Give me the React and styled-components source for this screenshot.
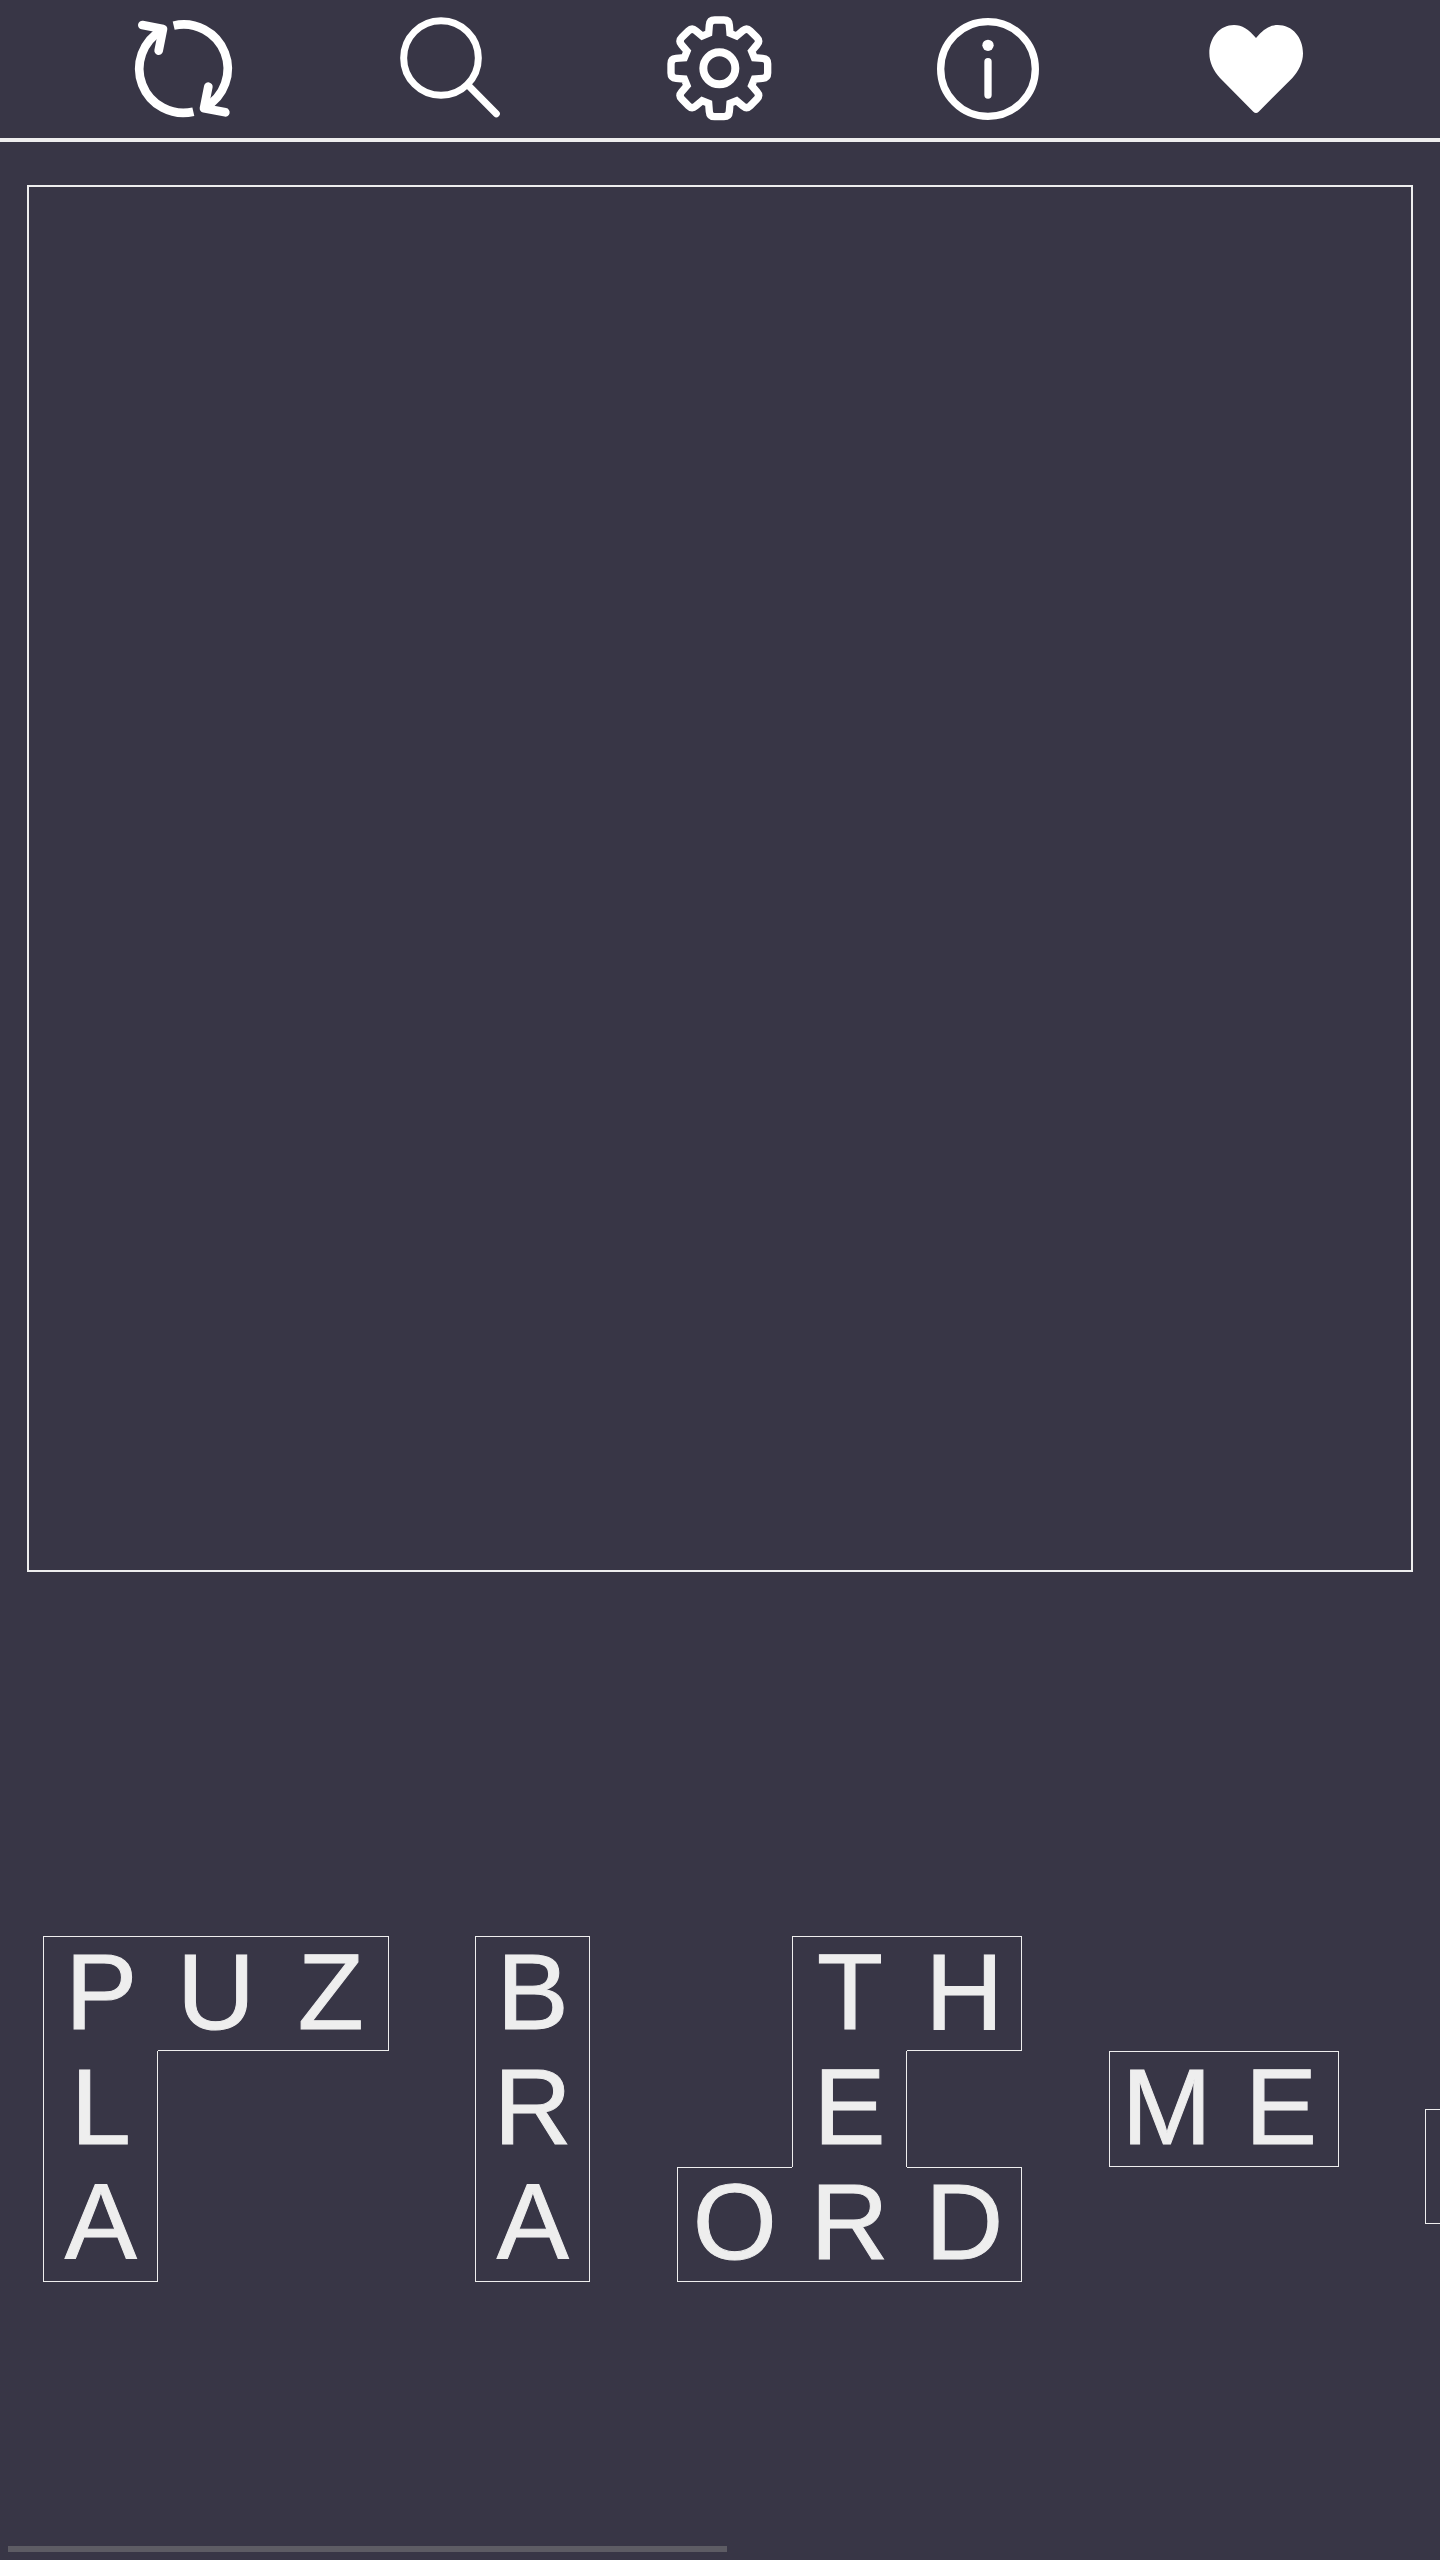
import React from "react";
import styled, { createGlobalStyle } from "styled-components";

const INK = "#eeeeee";
const BACKGROUND = "#383646";

const GlobalStyle = createGlobalStyle`
  *, *::before, *::after {
    box-sizing: border-box;
  }
  body {
    margin: 0;
    background: ${BACKGROUND};
    color: ${INK};
    font-family: "Liberation Sans", Helvetica, Arial, sans-serif;
  }
`;

const Page = styled.div`
  display: flex;
  flex-direction: column;
  min-height: 100vh;
  overflow: hidden;
`;

const Toolbar = styled.header`
  display: flex;
  padding: 0 50px;
  border-bottom: 4px solid ${INK};
`;

const ToolButton = styled.button`
  flex: 1;
  display: flex;
  align-items: center;
  justify-content: center;
  height: 138px;
  padding: 0;
  border: 0;
  background: none;
  color: #ffffff;
  cursor: pointer;
`;

const Icon = styled.svg`
  width: 120px;
  height: 120px;
  fill: none;
  stroke: currentColor;
`;

const Board = styled.main`
  align-self: center;
  box-sizing: content-box;
  width: 96vw;
  aspect-ratio: 1;
  margin-top: 3vw;
  border: 2px solid ${INK};
`;

const Tray = styled.section`
  position: relative;
  flex: 1;
  display: flex;
  margin-top: 6vw;
`;

const PieceList = styled.div`
  flex: 1;
  min-width: 0;
  display: flex;
  align-items: center;
  gap: 6vw;
  padding: 0 3vw;
  overflow-x: auto;
  scrollbar-width: none;
`;

const ScrollThumb = styled.div`
  position: absolute;
  left: 8px;
  bottom: 8px;
  width: calc(50% - 1px);
  height: 6px;
  background: #5d5c64;
`;

const PieceGrid = styled.div`
  flex: none;
  display: grid;
  grid-template-columns: repeat(${(p) => p.$columns}, 8vw);
  grid-auto-rows: 8vw;
`;

const Cell = styled.div`
  display: flex;
  align-items: center;
  justify-content: center;
  padding-bottom: 4px;
  border: 0 solid ${INK};
  border-width: ${(p) => p.$edges.map((on) => (on ? "1px" : "0")).join(" ")};
  font-size: 108px;
  line-height: 108px;
  -webkit-text-stroke: 1px ${INK};
`;

/* "." is a hole in the shape, "_" a tile that carries no letter. */
const pieces = [
  ["PUZ", "L..", "A.."],
  ["B", "R", "A"],
  [".TH", ".E.", "ORD"],
  ["ME"],
  [".__", "__."],
];

function Piece({ rows }) {
  const filled = (r, c) => Boolean(rows[r]?.[c]) && rows[r][c] !== ".";
  return (
    <PieceGrid $columns={rows[0].length}>
      {rows.flatMap((row, r) =>
        [...row].map((letter, c) => {
          const on = filled(r, c);
          const edges = [
            on && !filled(r - 1, c),
            on && !filled(r, c + 1),
            on && !filled(r + 1, c),
            on && !filled(r, c - 1),
          ];
          return (
            <Cell key={`${r}-${c}`} $edges={edges}>
              {on && letter !== "_" ? letter : null}
            </Cell>
          );
        })
      )}
    </PieceGrid>
  );
}

/* Outline of an eight-toothed gear, one tooth rotated round the origin. */
function gearPath() {
  const tooth = [
    [-32, -105],
    [-30, -130],
    [-29, -145],
    [-14, -145],
    [14, -145],
    [29, -145],
    [30, -130],
    [32, -105],
  ];
  let d = "";
  for (let i = 0; i < 8; i += 1) {
    const a = (i * Math.PI) / 4;
    const [p0, p1, p2, p3, p4, p5, p6, p7] = tooth.map(([x, y]) =>
      [
        x * Math.cos(a) - y * Math.sin(a),
        x * Math.sin(a) + y * Math.cos(a),
      ]
        .map((n) => n.toFixed(1))
        .join(" ")
    );
    d += `${i ? "L" : "M"}${p0}L${p1}Q${p2} ${p3}L${p4}Q${p5} ${p6}L${p7}`;
  }
  return `${d}Z`;
}

const RestartIcon = () => (
  <Icon viewBox="42 27 360 360" strokeWidth="26" aria-hidden="true">
    <path d="M191 76.8A132.5 132.5 0 0 1 285.5 321.5" />
    <path d="M250 335.2A132.5 132.5 0 0 1 155.5 90.5" />
    <path
      d="M97 75L159 87L146 152M295 260L282 325L346 337"
      strokeLinecap="round"
      strokeLinejoin="round"
    />
  </Icon>
);

const SearchIcon = () => (
  <Icon viewBox="36 27 360 360" strokeWidth="21" aria-hidden="true">
    <circle cx="183" cy="174" r="112" />
    <path d="M263 254L349 341" strokeLinecap="round" />
  </Icon>
);

const SettingsIcon = () => (
  <Icon viewBox="-178 -178 360 360" strokeWidth="22" aria-hidden="true">
    <path d={gearPath()} />
    <circle r="48" strokeWidth="24" />
  </Icon>
);

const InfoIcon = () => (
  <Icon viewBox="39 27 360 360" strokeWidth="22" aria-hidden="true">
    <circle cx="219" cy="207" r="142" />
    <circle cx="219" cy="136" r="17" fill="currentColor" stroke="none" />
    <path d="M219 185V285" strokeLinecap="round" />
  </Icon>
);

const HeartIcon = () => (
  <Icon viewBox="48 27 360 360" aria-hidden="true">
    <path
      fill="currentColor"
      stroke="none"
      d="M228 114C206 88 186 75 162 75C120 75 88 112 88 160C88 188 101 213 120 234L220 335Q228 343 236 335L337 234C356 213 369 188 369 160C369 112 337 75 293 75C270 75 250 88 228 114Z"
    />
  </Icon>
);

const tools = [
  ["New game", RestartIcon],
  ["Search", SearchIcon],
  ["Settings", SettingsIcon],
  ["Rules", InfoIcon],
  ["Support", HeartIcon],
];

export default function App() {
  return (
    <>
      <GlobalStyle />
      <Page>
        <Toolbar>
          {tools.map(([label, Glyph]) => (
            <ToolButton key={label} type="button" aria-label={label}>
              <Glyph />
            </ToolButton>
          ))}
        </Toolbar>
        <Board />
        <Tray>
          <PieceList>
            {pieces.map((rows) => (
              <Piece key={rows.join("/")} rows={rows} />
            ))}
          </PieceList>
          <ScrollThumb />
        </Tray>
      </Page>
    </>
  );
}
